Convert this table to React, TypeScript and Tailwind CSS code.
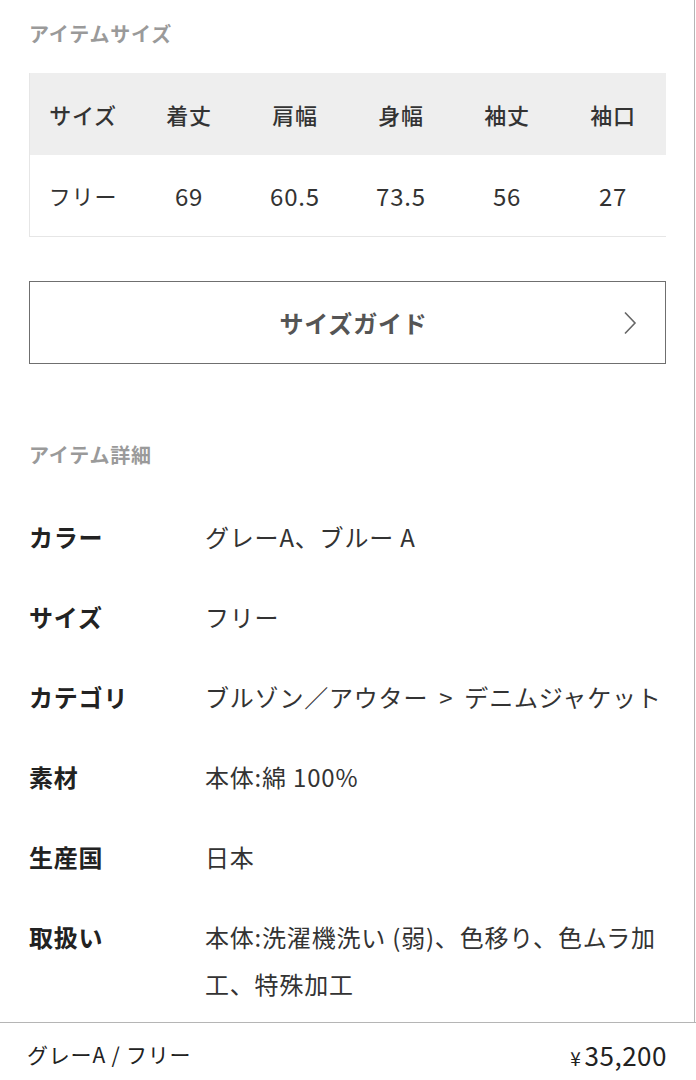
import React from "react";

const headers = ["サイズ", "着丈", "肩幅", "身幅", "袖丈", "袖口"];
const values = ["フリー", "69", "60.5", "73.5", "56", "27"];

const details: [string, React.ReactNode][] = [
  ["カラー", "グレーA、ブルー A"],
  ["サイズ", "フリー"],
  [
    "カテゴリ",
    <span className="whitespace-nowrap">
      ブルゾン／アウター<span className="mx-[11px]">&gt;</span>デニムジャケット
    </span>,
  ],
  ["素材", "本体:綿 100%"],
  ["生産国", "日本"],
  ["取扱い", "本体:洗濯機洗い (弱)、色移り、色ムラ加工、特殊加工"],
];

export default function App() {
  return (
    <div
      className="w-[696px] h-[1080px] bg-white flex flex-col overflow-hidden tracking-[0.05em]"
      style={{ fontFamily: '"Noto Sans CJK JP", "Noto Sans", sans-serif' }}
    >
      <div className="flex-1 min-h-0 overflow-hidden w-[695px] border-r border-[#b5b5b5] pl-[29px] pr-[28px] pt-[20px]">
        <h2 className="text-[20px] leading-[28px] font-bold text-[#9a9a9a]">アイテムサイズ</h2>

        <div className="mt-[25px] border-l border-b border-[#e6e6e6]">
          <div className="grid grid-cols-6 h-[82px] bg-[#eeeeee] items-center">
            {headers.map((h) => (
              <div key={h} className="text-center text-[22px] font-medium text-[#333]">
                {h}
              </div>
            ))}
          </div>
          <div className="grid grid-cols-6 h-[81px] items-center">
            {values.map((v, i) => (
              <div
                key={i}
                className={
                  i === 0
                    ? "text-center text-[22px] text-[#333]"
                    : "text-center text-[24px] text-[#333]"
                }
              >
                {v}
              </div>
            ))}
          </div>
        </div>

        <div className="mt-[44px] h-[83px] border border-[#6f6f6f] relative flex items-center justify-center pl-[12px]">
          <span className="text-[24px] font-bold text-[#555]">サイズガイド</span>
          <svg
            className="absolute right-[28px] top-1/2 -translate-y-1/2"
            width="14"
            height="24"
            viewBox="0 0 14 24"
            fill="none"
            stroke="#666"
            strokeWidth="1.6"
          >
            <path d="M2 1.5 L12 12 L2 22.5" />
          </svg>
        </div>

        <h2 className="mt-[77px] text-[20px] leading-[28px] font-bold text-[#9a9a9a]">アイテム詳細</h2>

        <div className="mt-[28px]">
          {details.map(([k, v]) => (
            <div key={k} className="flex pt-[16px] pb-[17px]">
              <div className="w-[176px] shrink-0 text-[24px] leading-[47px] font-bold text-[#222]">{k}</div>
              <div className="flex-1 text-[24px] leading-[47px] text-[#333]">{v}</div>
            </div>
          ))}
        </div>
      </div>

      <div className="h-[58px] shrink-0 border-t border-[#b5b5b5] flex items-center justify-between pl-[27px] pr-[29px] pt-[6px]">
        <span className="text-[21px] text-[#222]">グレーA / フリー</span>
        <span className="text-[#222] flex items-baseline">
          <span className="text-[19px] mr-[3px]">¥</span>
          <span className="text-[26px] tracking-[0.02em]">35,200</span>
        </span>
      </div>
    </div>
  );
}
